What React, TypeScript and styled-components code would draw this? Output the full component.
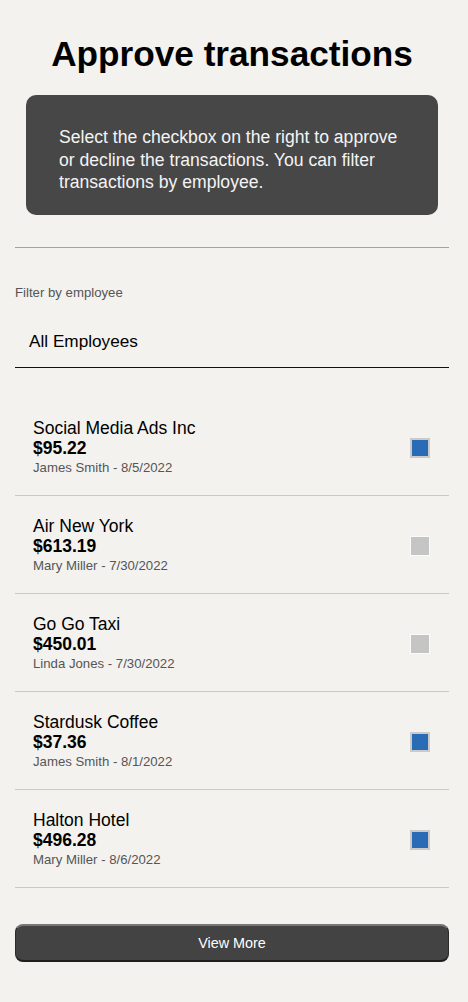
import React from "react";
import styled, { createGlobalStyle } from "styled-components";

const GlobalStyle = createGlobalStyle`
  html, body {
    margin: 0;
    padding: 0;
    background: #f3f2ef;
  }
  body {
    font-family: "Liberation Sans", Arial, Helvetica, sans-serif;
    color: #000;
  }
  * { box-sizing: border-box; }
`;

const Page = styled.main`
  padding: 34px 19px 40px 15px;
  display: flex;
  flex-direction: column;
`;

const Title = styled.h1`
  margin: 0;
  font-size: 35.2px;
  font-weight: 700;
  line-height: 40.4px;
  text-align: center;
`;

const InfoBox = styled.div`
  margin: 21px 11px 0;
  background: #474747;
  border-radius: 10px;
  padding: 31px 28px 21px 33px;
  color: #f4f4f4;
  font-size: 17.6px;
  line-height: 22.5px;
  height: 120px;
`;

const Divider = styled.hr`
  margin: 32px 0 0;
  border: none;
  border-top: 1px solid #a3a3a3;
  height: 0;
`;

const FilterLabel = styled.label`
  margin-top: 37px;
  font-size: 13.2px;
  line-height: 15px;
  color: #555;
`;

const Select = styled.div`
  margin-top: 15px;
  padding: 16px 14px 16px;
  font-size: 17.2px;
  line-height: 20px;
  border-bottom: 1px solid #111;
`;

const List = styled.ul`
  list-style: none;
  margin: 30px 0 0;
  padding: 0;
`;

const Item = styled.li`
  display: flex;
  align-items: center;
  justify-content: space-between;
  height: 98px;
  padding: 20px 19px 18px 18px;
  border-bottom: 1px solid #c9c9c9;
`;

const Info = styled.div`
  display: flex;
  flex-direction: column;
`;

const Vendor = styled.span`
  font-size: 17.5px;
  line-height: 20px;
`;

const Amount = styled.span`
  font-size: 17.5px;
  font-weight: 700;
  line-height: 21px;
`;

const Meta = styled.span`
  font-size: 13.2px;
  line-height: 18px;
  color: #555;
`;

const Check = styled.span<{ $checked: boolean }>`
  width: 20px;
  height: 20px;
  flex: none;
  background: ${(p) => (p.$checked ? "#2a6bb6" : "#c5c5c5")};
  border: ${(p) => (p.$checked ? "2px solid #cacaca" : "1px solid #fafafa")};
`;

const Button = styled.button`
  margin-top: 36px;
  height: 38px;
  width: 100%;
  background: #434343;
  color: #fff;
  font-family: "Liberation Sans", Arial, sans-serif;
  font-size: 14.4px;
  border-radius: 8px;
  border: 1px solid #2a2a2a;
  border-top: 2px solid #777;
  border-bottom: 2px solid #1e1e1e;
  cursor: pointer;
`;

const transactions = [
  { vendor: "Social Media Ads Inc", amount: "$95.22", who: "James Smith - 8/5/2022", checked: true },
  { vendor: "Air New York", amount: "$613.19", who: "Mary Miller - 7/30/2022", checked: false },
  { vendor: "Go Go Taxi", amount: "$450.01", who: "Linda Jones - 7/30/2022", checked: false },
  { vendor: "Stardusk Coffee", amount: "$37.36", who: "James Smith - 8/1/2022", checked: true },
  { vendor: "Halton Hotel", amount: "$496.28", who: "Mary Miller - 8/6/2022", checked: true },
];

export default function App() {
  return (
    <>
      <GlobalStyle />
      <Page>
        <Title>Approve transactions</Title>
        <InfoBox>
          Select the checkbox on the right to approve or decline the transactions. You can filter
          transactions by employee.
        </InfoBox>
        <Divider />
        <FilterLabel>Filter by employee</FilterLabel>
        <Select>All Employees</Select>
        <List>
          {transactions.map((t) => (
            <Item key={t.vendor}>
              <Info>
                <Vendor>{t.vendor}</Vendor>
                <Amount>{t.amount}</Amount>
                <Meta>{t.who}</Meta>
              </Info>
              <Check $checked={t.checked} role="checkbox" aria-checked={t.checked} />
            </Item>
          ))}
        </List>
        <Button>View More</Button>
      </Page>
    </>
  );
}
